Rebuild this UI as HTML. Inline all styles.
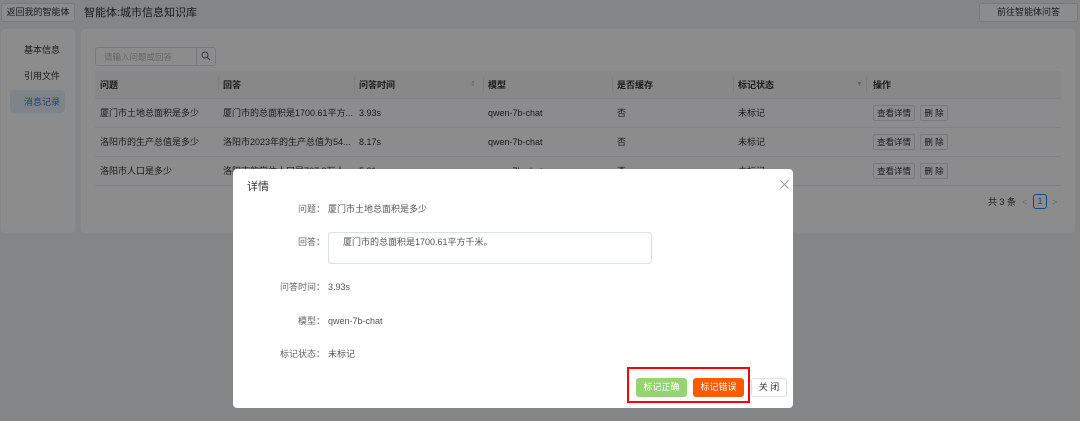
<!DOCTYPE html>
<html><head><meta charset="utf-8"><style>
*{margin:0;padding:0;box-sizing:border-box}
body{width:1080px;height:421px;overflow:hidden;background:#f0f2f5;font-family:"Liberation Sans","Noto Sans CJK SC",sans-serif;font-size:9px;color:#333;position:relative}
.a{position:absolute;white-space:nowrap;line-height:12px}
.btn{position:absolute;border:1px solid #dcdfe6;background:#fff;border-radius:3px;text-align:center;color:#333}
.panel{position:absolute;background:#fff;border-radius:4px}
.row{position:absolute;left:95px;width:966px;height:29px;border-bottom:1px solid #ebeef5}
.row span{position:absolute;top:0;line-height:29px;white-space:nowrap}
.hd{background:#f7f8fa;font-weight:bold}
.sep{position:absolute;top:6px;width:1px;height:16px;background:#e4e7ed}
.sb{position:absolute;border:1px solid #dcdfe6;background:#fff;border-radius:2px;height:16px;top:6px;font-size:8.5px;line-height:14px;text-align:center}
#ov{position:absolute;left:0;top:0;width:1080px;height:421px;background:rgba(0,0,0,0.45)}
#m{position:absolute;left:233px;top:169px;width:560px;height:239px;background:#fff;border-radius:4px}
.lb{position:absolute;width:92px;text-align:right;color:#666;left:0;line-height:12px}
.v{position:absolute;left:95px;color:#555;line-height:12px;white-space:nowrap}
</style></head><body>
<div class="btn" style="left:1px;top:3px;width:74px;height:19px;line-height:17px">返回我的智能体</div>
<div class="a" style="left:84px;top:6px;font-size:11px;line-height:14px">智能体:城市信息知识库</div>
<div class="btn" style="left:979px;top:3px;width:99px;height:19px;line-height:17px">前往智能体问答</div>
<div class="panel" style="left:1px;top:29px;width:74px;height:204px"></div>
<div class="a" style="left:24px;top:44px">基本信息</div>
<div class="a" style="left:24px;top:70px">引用文件</div>
<div class="a" style="left:10px;top:90px;width:55px;height:23px;background:#e8f0fb;border-radius:4px"></div>
<div class="a" style="left:24px;top:96px;color:#3a7bd5">消息记录</div>
<div class="panel" style="left:81px;top:29px;width:994px;height:204px"></div>
<div class="a" style="left:95px;top:47px;width:121px;height:19px;border:1px solid #dcdfe6;border-radius:3px;background:#fff"></div>
<div class="a" style="left:104px;top:51px;color:#bbb;font-size:8.5px">请输入问题或回答</div>
<div class="a" style="left:196px;top:47px;width:1px;height:19px;background:#dcdfe6"></div>
<svg class="a" style="left:201px;top:51px" width="10" height="10" viewBox="0 0 10 10"><circle cx="4" cy="4" r="3" fill="none" stroke="#666" stroke-width="1"/><path d="M6.2 6.2L9 9" stroke="#666" stroke-width="1"/></svg>
<div class="row hd" style="top:71px;height:28px">
<span style="left:5px;line-height:28px">问题</span><div class="sep" style="left:123px"></div>
<span style="left:128px;line-height:28px">回答</span><div class="sep" style="left:259px"></div>
<span style="left:264px;line-height:28px">问答时间</span><span style="left:375px;color:#bbb;font-weight:normal;font-size:7px;line-height:28px">⇕</span><div class="sep" style="left:388px"></div>
<span style="left:393px;line-height:28px">模型</span><div class="sep" style="left:517px"></div>
<span style="left:522px;line-height:28px">是否缓存</span><div class="sep" style="left:638px"></div>
<span style="left:643px;line-height:28px">标记状态</span><span style="left:761px;color:#bbb;font-size:7px;line-height:28px">▼</span><div class="sep" style="left:771px"></div>
<span style="left:778px;line-height:28px">操作</span></div>
<div class="row" style="top:99px"><span style="left:5px">厦门市土地总面积是多少</span><span style="left:128px">厦门市的总面积是1700.61平方...</span><span style="left:264px">3.93s</span><span style="left:393px">qwen-7b-chat</span><span style="left:522px">否</span><span style="left:643px">未标记</span><div class="sb" style="left:778px;width:42px">查看详情</div><div class="sb" style="left:825px;width:28px">删 除</div></div>
<div class="row" style="top:128px"><span style="left:5px">洛阳市的生产总值是多少</span><span style="left:128px">洛阳市2023年的生产总值为54...</span><span style="left:264px">8.17s</span><span style="left:393px">qwen-7b-chat</span><span style="left:522px">否</span><span style="left:643px">未标记</span><div class="sb" style="left:778px;width:42px">查看详情</div><div class="sb" style="left:825px;width:28px">删 除</div></div>
<div class="row" style="top:157px"><span style="left:5px">洛阳市人口是多少</span><span style="left:128px">洛阳市的常住人口是707.9万人</span><span style="left:264px">5.21s</span><span style="left:393px">qwen-7b-chat</span><span style="left:522px">否</span><span style="left:643px">未标记</span><div class="sb" style="left:778px;width:42px">查看详情</div><div class="sb" style="left:825px;width:28px">删 除</div></div>
<div class="a" style="left:988px;top:196px">共 3 条</div>
<div class="a" style="left:1022px;top:196px;color:#bbb">&lt;</div>
<div class="a" style="left:1033px;top:194px;width:14px;height:15px;border:1px solid #3a7bd5;border-radius:3px;color:#3a7bd5;text-align:center;line-height:13px">1</div>
<div class="a" style="left:1052px;top:196px;color:#bbb">&gt;</div>
<div id="ov"></div>
<div id="m">
<div class="a" style="left:14px;top:11px;font-size:11px;line-height:14px;color:#333">详情</div>
<svg class="a" style="left:547px;top:11px" width="9" height="9" viewBox="0 0 9 9"><path d="M0.5 0.5L8.5 8.5M8.5 0.5L0.5 8.5" stroke="#999" stroke-width="1"/></svg>
<div class="lb" style="top:34px">问题：</div><div class="v" style="top:34px">厦门市土地总面积是多少</div>
<div class="lb" style="top:67px">回答：</div>
<div class="a" style="left:95px;top:63px;width:324px;height:32px;border:1px solid #dcdfe6;border-radius:4px"></div>
<div class="v" style="top:67px;left:110px">厦门市的总面积是1700.61平方千米。</div>
<div class="lb" style="top:112px">问答时间：</div><div class="v" style="top:112px">3.93s</div>
<div class="lb" style="top:146px">模型：</div><div class="v" style="top:146px">qwen-7b-chat</div>
<div class="lb" style="top:179px">标记状态：</div><div class="v" style="top:179px">未标记</div>
<div class="a" style="left:394px;top:198px;width:123px;height:36px;border:2px solid #f00"></div>
<div class="a" style="left:403px;top:209px;width:51px;height:19px;background:#95d475;border-radius:3px;color:#fff;text-align:center;line-height:19px">标记正确</div>
<div class="a" style="left:460px;top:209px;width:51px;height:19px;background:#ff5a00;border-radius:3px;color:#fff;text-align:center;line-height:19px">标记错误</div>
<div class="a" style="left:518px;top:209px;width:36px;height:19px;border:1px solid #dcdfe6;border-radius:3px;text-align:center;line-height:17px">关 闭</div>
</div>
</body></html>
